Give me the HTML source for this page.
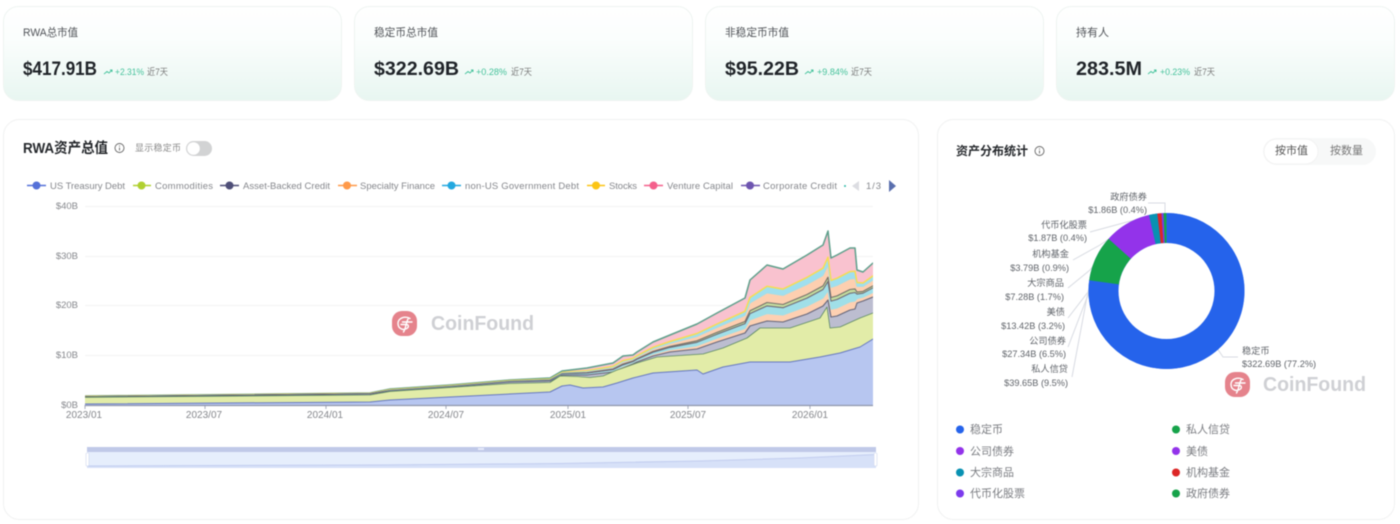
<!DOCTYPE html>
<html><head><meta charset="utf-8">
<style>
html,body{margin:0;padding:0;background:#fff}
body{width:1400px;height:524px;overflow:hidden;position:relative;font-family:"Liberation Sans","Noto Sans CJK SC",sans-serif}
svg{position:absolute;left:0;top:0;filter:blur(.4px)}
text{font-family:"Liberation Sans","Noto Sans CJK SC",sans-serif}
</style></head><body>
<svg width="1400" height="524" viewBox="0 0 1400 524" xmlns="http://www.w3.org/2000/svg">
<defs>
<linearGradient id="cg" x1="0" y1="0" x2="0" y2="1"><stop offset="0" stop-color="#fff"/><stop offset=".35" stop-color="#fbfefd"/><stop offset="1" stop-color="#e8f6f1"/></linearGradient>
<clipPath id="cc"><rect x="85" y="200" width="788" height="205"/></clipPath>
<g id="logo"><rect width="25" height="25" rx="10" fill="#e5838c"/><path d="M18 7.500C13 4.500 6 7 6 12.500C6 18 12 20 15.500 17C17 15.500 16.500 13.500 14 13.500H9M10.500 11H20M16 8C14 12 14 17 11.500 21" fill="none" stroke="#fff" stroke-width="1.400" stroke-linecap="round"/></g>
</defs>

<!-- cards -->
<rect x="3.500" y="6.500" width="338" height="94" rx="15" fill="url(#cg)" stroke="#eef4f1"/>
<rect x="354.500" y="6.500" width="338" height="94" rx="15" fill="url(#cg)" stroke="#eef4f1"/>
<rect x="705.500" y="6.500" width="338" height="94" rx="15" fill="url(#cg)" stroke="#eef4f1"/>
<rect x="1056.500" y="6.500" width="338" height="94" rx="15" fill="url(#cg)" stroke="#eef4f1"/>
<g font-size="11" fill="#505358">
<text x="23" y="36" textLength="55" lengthAdjust="spacingAndGlyphs">RWA总市值</text>
<text x="374" y="36" textLength="64" lengthAdjust="spacingAndGlyphs">稳定币总市值</text>
<text x="725" y="36" textLength="64" lengthAdjust="spacingAndGlyphs">非稳定币市值</text>
<text x="1076" y="36" font-size="11">持有人</text>
</g>
<g font-size="19" font-weight="700" fill="#1f2328">
<text x="23" y="75" textLength="74" lengthAdjust="spacingAndGlyphs">$417.91B</text>
<text x="374" y="75" textLength="85" lengthAdjust="spacingAndGlyphs">$322.69B</text>
<text x="725" y="75" textLength="74" lengthAdjust="spacingAndGlyphs">$95.22B</text>
<text x="1076" y="75" textLength="66" lengthAdjust="spacingAndGlyphs">283.5M</text>
</g>
<g fill="none" stroke="#4cc5a0" stroke-width="1">
<path d="M104 74l3-2.500 2 1.500 3-3m-2 0h2v2"/>
<path d="M465 74l3-2.500 2 1.500 3-3m-2 0h2v2"/>
<path d="M805 74l3-2.500 2 1.500 3-3m-2 0h2v2"/>
<path d="M1148 74l3-2.500 2 1.500 3-3m-2 0h2v2"/>
</g>
<g font-size="9.500" fill="#45c29b">
<text x="115" y="75" textLength="29" lengthAdjust="spacingAndGlyphs">+2.31%</text>
<text x="476" y="75" textLength="31" lengthAdjust="spacingAndGlyphs">+0.28%</text>
<text x="817" y="75" textLength="31" lengthAdjust="spacingAndGlyphs">+9.84%</text>
<text x="1160" y="75" textLength="30" lengthAdjust="spacingAndGlyphs">+0.23%</text>
</g>
<g font-size="9" fill="#777">
<text x="147" y="75" textLength="21" lengthAdjust="spacingAndGlyphs">近7天</text>
<text x="511" y="75" textLength="21" lengthAdjust="spacingAndGlyphs">近7天</text>
<text x="851" y="75" textLength="21" lengthAdjust="spacingAndGlyphs">近7天</text>
<text x="1194" y="75" textLength="21" lengthAdjust="spacingAndGlyphs">近7天</text>
</g>

<!-- panels -->
<rect x="3.500" y="119.500" width="915" height="400" rx="16" fill="#fff" stroke="#f0f1f1"/>
<rect x="937.500" y="119.500" width="457" height="400" rx="16" fill="#fff" stroke="#f0f1f1"/>

<!-- left header -->
<text x="23" y="153" font-size="14.500" font-weight="700" fill="#25282c" textLength="85" lengthAdjust="spacingAndGlyphs">RWA资产总值</text>
<circle cx="119.500" cy="148" r="4.500" fill="none" stroke="#666" stroke-width=".9"/><path d="M119.500 147.500v3M119.500 145.500v1" stroke="#666" stroke-width=".9"/>
<text x="135" y="151" font-size="9" fill="#888" textLength="46">显示稳定币</text>
<rect x="186" y="141" width="26" height="15" rx="7.500" fill="#d2d3d4"/><circle cx="193.500" cy="148.500" r="6.300" fill="#fff"/>

<!-- legend -->
<g stroke-width="1.500">
<path d="M27 185.500h19" stroke="#5470d8"/><path d="M133 185.500h18" stroke="#b0d030"/><path d="M220 185.500h19" stroke="#4f4f78"/><path d="M338 185.500h19" stroke="#ff9a4a"/><path d="M442 185.500h19" stroke="#22a8e0"/><path d="M587 185.500h18" stroke="#fcc515"/><path d="M644 185.500h19" stroke="#f4608c"/><path d="M741 185.500h19" stroke="#6e55b0"/>
</g>
<circle cx="36.500" cy="185.500" r="4" fill="#5470d8"/><circle cx="141.500" cy="185.500" r="4" fill="#b0d030"/><circle cx="229.500" cy="185.500" r="4" fill="#4f4f78"/><circle cx="347" cy="185.500" r="4" fill="#ff9a4a"/><circle cx="451.500" cy="185.500" r="4" fill="#22a8e0"/><circle cx="596" cy="185.500" r="4" fill="#fcc515"/><circle cx="653.500" cy="185.500" r="4" fill="#f4608c"/><circle cx="750" cy="185.500" r="4" fill="#6e55b0"/>
<circle cx="845" cy="186" r="1" fill="#3ba"/>
<g font-size="9.500" fill="#85878c">
<text x="50" y="189" textLength="75">US Treasury Debt</text>
<text x="155" y="189" textLength="58">Commodities</text>
<text x="243" y="189" textLength="87">Asset-Backed Credit</text>
<text x="360" y="189" textLength="75">Specialty Finance</text>
<text x="465" y="189" textLength="114">non-US Government Debt</text>
<text x="609" y="189" textLength="28">Stocks</text>
<text x="667" y="189" textLength="66">Venture Capital</text>
<text x="763" y="189" textLength="74">Corporate Credit</text>
<text x="866" y="189" textLength="15">1/3</text>
</g>
<path d="M859 181v10l-7-5z" fill="#dcdde2"/><path d="M889 180v12l7-6z" fill="#5a6fae"/>

<!-- chart grid -->
<path d="M85 206.500H873M85 256.500H873M85 305.500H873M85 355.500H873" stroke="#f3f3f3"/>
<g font-size="9.500" fill="#85878c" text-anchor="end">
<text x="78" y="209">$40B</text><text x="78" y="259">$30B</text><text x="78" y="308">$20B</text><text x="78" y="358">$10B</text><text x="78" y="408">$0B</text>
</g>

<g clip-path="url(#cc)" stroke-linejoin="round">
<path fill="#f9c2cf" stroke="#5fa08c" stroke-width="1.500" d="M80 396L85 396L370 393L390 389L450 385L510 380L550 378L562 371L587 368L613 363L623 356L633 355L637 352L653 342L670 335L697 324L717 313L745 298L750 280L767 265L783 269L807 255L823 245L828 231L831 258L837 255L850 248L855 248L857 270L863 272L873 263L878 263V410H80Z"/>
<path fill="#a0dfee" stroke="#f8dc50" stroke-width="1.500" d="M80 396.400L85 396.400L370 393.400L390 389.800L450 385.800L510 380.800L550 379.100L562 372.500L587 370.700L613 366.400L623 360.600L633 358.400L637 355.800L653 347.300L670 341.500L697 333.500L717 324L745 311.300L750 297.500L767 286.300L783 289.100L807 277.400L823 268.200L828 257.200L831 280.400L837 278.200L850 271.600L855 271.200L857 282.500L863 283L873 275.900L878 275.900V410H80Z"/>
<path fill="#fdcfb0" stroke="#a0dfe8" stroke-width=".8" d="M80 396.500L85 396.500L370 393.500L390 390L450 386L510 381L550 379.500L562 373L587 371.500L613 367.500L623 362L633 359.500L637 357L653 349L670 343.500L697 336.500L717 327.500L745 315.500L750 303L767 293L783 295.500L807 284.500L823 275.500L828 265.500L831 287.500L837 285.500L850 279L855 278.500L857 286.500L863 286.500L873 280L878 280V410H80Z"/>
<path fill="#c4dc9e" stroke="#74716a" stroke-width="1.100" d="M80 396.700L85 396.700L370 393.700L390 390.300L450 386.300L510 381.300L550 380L562 373.700L587 372.700L613 369L623 364L633 361L637 358.700L653 351.400L670 346.400L697 340.800L717 332.400L745 321.500L750 310.800L767 302.500L783 304.500L807 294.500L823 285.900L828 277.200L831 297.500L837 295.900L850 289.500L855 288.900L857 292.100L863 291.400L873 285.800L878 285.800V410H80Z"/>
<path fill="#a0dfe8" stroke="#6f6b78" stroke-width="1.100" d="M80 396.700L85 396.700L370 393.700L390 390.500L450 386.500L510 381.500L550 380.200L562 373.900L587 373.100L613 369.600L623 364.800L633 361.600L637 359.300L653 352.200L670 347.400L697 342.300L717 334.200L745 323.600L750 313.600L767 305.900L783 307.700L807 298.100L823 289.500L828 281.400L831 301.100L837 299.500L850 293.300L855 292.500L857 294.100L863 293.200L873 287.800L878 287.800V410H80Z"/>
<path fill="#fdd0b2" stroke="#a0dfe8" stroke-width=".8" d="M80 396.900L85 396.900L370 393.900L390 390.700L450 386.700L510 381.700L550 380.600L562 374.500L587 374.100L613 370.800L623 366.400L633 362.800L637 360.700L653 354.200L670 349.800L697 345.800L717 338.200L745 328.500L750 320L767 313.700L783 315.100L807 306.300L823 298.100L828 291L831 309.300L837 308.100L850 302L855 301.100L857 298.700L863 297.200L873 292.600L878 292.600V410H80Z"/>
<path fill="#bcbdd0" stroke="#66667a" stroke-width="1.100" d="M80 397L85 397L370 394L390 391L450 387L510 382L550 381L562 375L587 375L613 372L623 368L633 364L637 362L653 356L670 352L697 349L717 342L745 333L750 326L767 321L783 322L807 314L823 306L828 300L831 317L837 316L850 310L855 309L857 303L863 301L873 297L878 297V410H80Z"/>
<path fill="#e2eca8" stroke="#5d8a63" stroke-width=".8" d="M80 397.300L85 397.300L370 395L390 391.500L450 387.500L510 383.500L550 382.500L560 376L577 376.500L590 377.500L603 376L617 370L623 368L637 363L657 357L703 354L723 348L747 338L760 328L790 328L820 318L827 307L830 328L840 327L860 318L873 313L878 313V410H80Z"/>
<path fill="#b7c6f0" stroke="#6678c0" stroke-width="1" d="M80 404L85 404L370 402L390 400L450 397L550 392L562 386L570 385L583 388L603 387L617 383L633 378L653 373L697 370L703 374L723 367L750 362L790 362L820 357L840 353L860 347L873 339L878 339V410H80Z"/>
</g>
<path d="M85 405.500H873" stroke="#8f96ab" stroke-width="1.200"/>
<path d="M85 405v4M205 405v4M326 405v4M446 405v4M568 405v4M688 405v4M810 405v4" stroke="#8f96ab" stroke-width=".8"/>
<g font-size="10" fill="#85878c" text-anchor="middle">
<text x="84" y="418">2023/01</text><text x="204" y="418">2023/07</text><text x="325" y="418">2024/01</text><text x="446" y="418">2024/07</text><text x="568" y="418">2025/01</text><text x="688" y="418">2025/07</text><text x="810" y="418">2026/01</text>
</g>

<!-- datazoom -->
<rect x="87" y="447" width="789" height="5" fill="#c0c9e8"/>
<rect x="87" y="452" width="789" height="16" fill="#e6eefc"/>
<path d="M87 466L380 465L560 463.500L700 461L800 458L876 454.500V468H87Z" fill="#d7e1f8"/>
<path d="M87 466L380 465L560 463.500L700 461L800 458L876 454.500" fill="none" stroke="#c2cdef"/>
<rect x="478" y="448" width="6" height="2" fill="#e6eafa"/>
<rect x="86" y="453" width="3" height="13" rx="1" fill="#fff" stroke="#cfd7ee" stroke-width=".6"/>
<rect x="874" y="453" width="3" height="13" rx="1" fill="#fff" stroke="#cfd7ee" stroke-width=".6"/>

<!-- watermark 1 -->
<use href="#logo" x="392" y="311"/>
<text x="431" y="330" font-size="20" font-weight="700" fill="#cfd0d4" textLength="103" lengthAdjust="spacingAndGlyphs">CoinFound</text>

<!-- right header -->
<text x="956" y="155" font-size="12" font-weight="700" fill="#25282c">资产分布统计</text>
<circle cx="1039.500" cy="151" r="4.500" fill="none" stroke="#666" stroke-width=".9"/><path d="M1039.500 150.500v3M1039.500 148.500v1" stroke="#666" stroke-width=".9"/>
<rect x="1263" y="138" width="113" height="27" rx="13.500" fill="#f7f8f8"/>
<rect x="1264" y="139" width="54" height="25" rx="12.500" fill="#fff" stroke="#f2f2f2"/>
<text x="1275" y="154" font-size="11" fill="#555">按市值</text>
<text x="1330" y="154" font-size="11" fill="#777">按数量</text>

<!-- leader lines -->
<g fill="none" stroke="#d8dbe2" stroke-width="1">
<path d="M1148 203H1165V214"/>
<path d="M1090 232L1127 222L1158 215"/>
<path d="M1073 260L1100 245L1125 228"/>
<path d="M1068 288L1090 270L1100 258"/>
<path d="M1068 318L1088 292L1092 275"/>
<path d="M1068 347L1088 295L1090 285"/>
<path d="M1072 377L1087 297L1089 290"/>
<path d="M1217 348L1223 357H1238"/>
</g>

<!-- donut -->
<circle cx="1166.500" cy="291" r="78" fill="#2563eb"/>
<path d="M1166.500 213A78 78 0 1 1 1089.200 280.300L1119 284.400A48 48 0 1 0 1166.500 243Z" fill="#2563eb"/>
<path d="M1089.200 280.300A78 78 0 0 1 1108.600 238.700L1130.900 258.800A48 48 0 0 0 1119 284.400Z" fill="#16a34a"/>
<path d="M1108.600 238.700A78 78 0 0 1 1149 215L1155.700 244.200A48 48 0 0 0 1130.900 258.800Z" fill="#9333ea"/>
<path d="M1149 215A78 78 0 0 1 1157.300 213.500L1160.800 243.300A48 48 0 0 0 1155.700 244.200Z" fill="#0891b2"/>
<path d="M1157.300 213.500A78 78 0 0 1 1161.600 213.200L1163.500 243.100A48 48 0 0 0 1160.800 243.300Z" fill="#dc2626"/>
<path d="M1161.600 213.200A78 78 0 0 1 1163.500 213.100L1164.700 243A48 48 0 0 0 1163.500 243.100Z" fill="#7c3aed"/>
<path d="M1163.500 213.100A78 78 0 0 1 1166.500 213L1166.500 243A48 48 0 0 0 1164.700 243Z" fill="#16a34a"/>
<circle cx="1166.500" cy="291" r="48" fill="#fff"/>

<g font-size="9.200" fill="#60646a" text-anchor="end">
<text x="1147" y="200">政府债券</text><text x="1147" y="213">$1.86B (0.4%)</text>
<text x="1087" y="228">代币化股票</text><text x="1087" y="241">$1.87B (0.4%)</text>
<text x="1069" y="257">机构基金</text><text x="1069" y="271">$3.79B (0.9%)</text>
<text x="1064" y="286">大宗商品</text><text x="1064" y="300">$7.28B (1.7%)</text>
<text x="1065" y="315">美债</text><text x="1065" y="329">$13.42B (3.2%)</text>
<text x="1066" y="344">公司债券</text><text x="1066" y="357">$27.34B (6.5%)</text>
<text x="1068" y="372">私人信贷</text><text x="1068" y="386">$39.65B (9.5%)</text>
</g>
<g font-size="9.200" fill="#60646a">
<text x="1242" y="354">稳定币</text><text x="1242" y="367">$322.69B (77.2%)</text>
</g>

<!-- watermark 2 -->
<use href="#logo" x="1225" y="372"/>
<text x="1263" y="391" font-size="20" font-weight="700" fill="#cfd0d4" textLength="103" lengthAdjust="spacingAndGlyphs">CoinFound</text>

<!-- donut legend -->
<circle cx="960" cy="429.500" r="4" fill="#2563eb"/><circle cx="960" cy="451" r="4" fill="#9333ea"/><circle cx="960" cy="472.500" r="4" fill="#0891b2"/><circle cx="960" cy="493.500" r="4" fill="#7c3aed"/>
<circle cx="1176" cy="429.500" r="4" fill="#16a34a"/><circle cx="1176" cy="451" r="4" fill="#9333ea"/><circle cx="1176" cy="472.500" r="4" fill="#dc2626"/><circle cx="1176" cy="493.500" r="4" fill="#16a34a"/>
<g font-size="11" fill="#7b7d82">
<text x="970" y="433">稳定币</text><text x="970" y="455">公司债券</text><text x="970" y="476">大宗商品</text><text x="970" y="497">代币化股票</text>
<text x="1186" y="433">私人信贷</text><text x="1186" y="455">美债</text><text x="1186" y="476">机构基金</text><text x="1186" y="497">政府债券</text>
</g>
</svg>
</body></html>
